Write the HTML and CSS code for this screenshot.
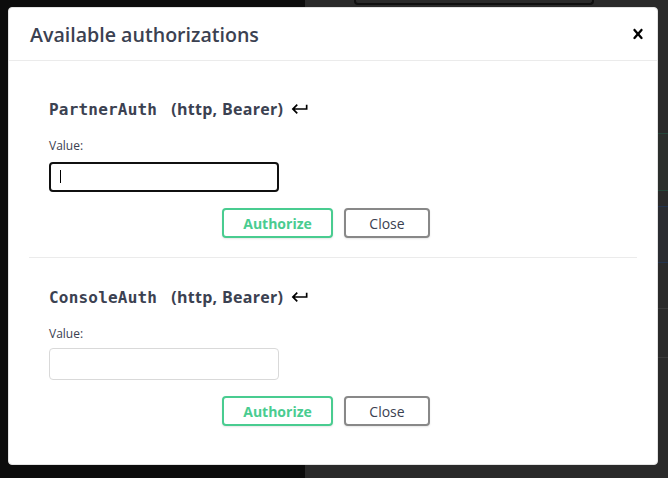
FILE: index.html
```html
<!DOCTYPE html>
<html lang="en">
<head>
<meta charset="utf-8">
<title>Available authorizations</title>
<link rel="stylesheet" href="styles.css">
</head>
<body>
<div class="page">
  <div class="page-left"></div>
  <div class="page-right">
    <div class="filter-box"></div>
    <div class="op op-post"></div>
    <div class="op op-get"></div>
    <div class="op op-plain"></div>
  </div>
</div>

<div class="modal">
  <div class="modal-header">
    <h3 class="modal-title">Available authorizations</h3>
    <button class="close-btn" type="button" aria-label="Close">
      <svg width="20" height="20" viewBox="0 0 20 20"><path d="M14.348 14.849c-.469.469-1.229.469-1.697 0L10 11.819l-2.651 3.029c-.469.469-1.229.469-1.697 0-.469-.469-.469-1.229 0-1.697l2.758-3.150-2.759-3.152c-.469-.469-.469-1.228 0-1.697.469-.469 1.228-.469 1.697 0L10 8.183l2.651-3.031c.469-.469 1.228-.469 1.697 0 .469.469.469 1.229 0 1.697l-2.758 3.152 2.758 3.150c.469.469.469 1.229 0 1.698z"/></svg>
    </button>
  </div>
  <div class="modal-content">
    <div class="auth-section">
      <h4 class="scheme-title"><code class="scheme-name">PartnerAuth</code><span class="scheme-type">(http, Bearer)</span><svg class="jump" width="20" height="20" viewBox="0 0 24 24"><path d="M19 7v4H5.83l3.58-3.59L8 6l-6 6 6 6 1.41-1.41L5.83 13H21V7z"/></svg></h4>
      <label class="field-label">Value:</label>
      <div class="input-wrap is-focused">
        <input class="auth-input" type="text">
        <span class="caret"></span>
      </div>
      <div class="btn-row">
        <button class="btn btn-authorize" type="button">Authorize</button>
        <button class="btn btn-close" type="button">Close</button>
      </div>
    </div>
    <div class="auth-section">
      <h4 class="scheme-title"><code class="scheme-name">ConsoleAuth</code><span class="scheme-type">(http, Bearer)</span><svg class="jump" width="20" height="20" viewBox="0 0 24 24"><path d="M19 7v4H5.83l3.58-3.59L8 6l-6 6 6 6 1.41-1.41L5.83 13H21V7z"/></svg></h4>
      <label class="field-label">Value:</label>
      <div class="input-wrap">
        <input class="auth-input" type="text">
      </div>
      <div class="btn-row">
        <button class="btn btn-authorize" type="button">Authorize</button>
        <button class="btn btn-close" type="button">Close</button>
      </div>
    </div>
  </div>
</div>
</body>
</html>
```

FILE: styles.css
```css
* { box-sizing: border-box; }

html, body {
  margin: 0;
  height: 100%;
}

body {
  font-family: "Open Sans", "Noto Sans", sans-serif;
  background: #0c0c0c;
  overflow: hidden;
}

.page {
  display: grid;
  grid-template-columns: 305px 1fr;
  height: 100vh;
}

.page-left { background: #0c0c0c; }

.page-right {
  background: #2a2a2a;
  display: flex;
  flex-direction: column;
}

.filter-box {
  margin-left: 49px;
  width: 240px;
  height: 5px;
  border: 2px solid #0f0f0f;
  border-top: none;
  border-radius: 0 0 4px 4px;
}

.op { margin-left: 30px; }

.op-post {
  margin-top: 128px;
  height: 58px;
  border-top: 1px solid #25463a;
  border-bottom: 1px solid #25463a;
  background: #2b2e2c;
}

.op-get {
  margin-top: 15px;
  height: 57px;
  border-top: 1px solid #22334d;
  border-bottom: 1px solid #22334d;
  background: #2a2c30;
}

.op-plain {
  margin-top: 45px;
  height: 50px;
  border-top: 1px solid #3a3a3a;
  border-bottom: 1px solid #3a3a3a;
}

/* modal */
.modal {
  position: absolute;
  top: 7px;
  left: 8px;
  width: 650px;
  background: #fff;
  border: 1px solid #e3e3e3;
  border-radius: 4px;
}

.modal-header {
  display: flex;
  align-items: center;
  justify-content: space-between;
  height: 53px;
  padding: 0 9px 0 21px;
  border-bottom: 1px solid #ebebeb;
}

.modal-title {
  margin: 0;
  font-size: 19.6px;
  font-weight: 600;
  color: #3b4151;
}

.close-btn {
  display: flex;
  width: 20px;
  height: 20px;
  padding: 0;
  border: none;
  background: none;
}

.close-btn svg { fill: #000; }

.modal-content {
  padding: 9px 20px 19px;
}

.auth-section {
  padding: 10px 20px;
}

.auth-section + .auth-section {
  border-top: 1px solid #ebebeb;
}

.scheme-title {
  display: flex;
  align-items: center;
  height: 22px;
  margin: 18px 0 0;
  font-size: 16px;
  font-weight: 700;
  letter-spacing: 0.3px;
  color: #3b4151;
}

.scheme-name {
  font-family: "DejaVu Sans Mono", "Liberation Mono", monospace;
  font-size: 16px;
  font-weight: 700;
  letter-spacing: 0.2px;
  margin-right: 14px;
}

.jump {
  margin-left: 7px;
  fill: #000;
}

.field-label {
  display: block;
  margin-top: 18px;
  height: 16px;
  line-height: 16px;
  font-size: 12px;
  color: #3b4151;
}

.input-wrap {
  position: relative;
  width: 230px;
  margin-top: 6px;
}

.auth-input {
  display: block;
  width: 230px;
  height: 32px;
  padding: 8px 10px;
  border: 1px solid #d9d9d9;
  border-radius: 4px;
  background: #fff;
  font: inherit;
  outline: none;
}

.input-wrap.is-focused { margin-top: 8px; }

.is-focused .auth-input {
  height: 30px;
  border: 2px solid #101010;
}

.caret {
  position: absolute;
  left: 11px;
  top: 8px;
  width: 1px;
  height: 13px;
  background: #000;
}

.btn-row {
  display: flex;
  justify-content: center;
  padding: 16px 0 9px;
}

.btn {
  height: 30px;
  padding: 0;
  border: 2px solid #888;
  border-radius: 4px;
  background: #fff;
  font-family: "Open Sans", "Noto Sans", sans-serif;
  font-size: 14px;
  box-shadow: 0 1px 2px rgba(0, 0, 0, 0.1);
}

.btn-authorize {
  width: 111px;
  margin-right: 11px;
  color: #49cc90;
  border-color: #49cc90;
  font-weight: 700;
}

.btn-close {
  width: 86px;
  margin-right: 14px;
  color: #3b4151;
  font-weight: 500;
}
```
